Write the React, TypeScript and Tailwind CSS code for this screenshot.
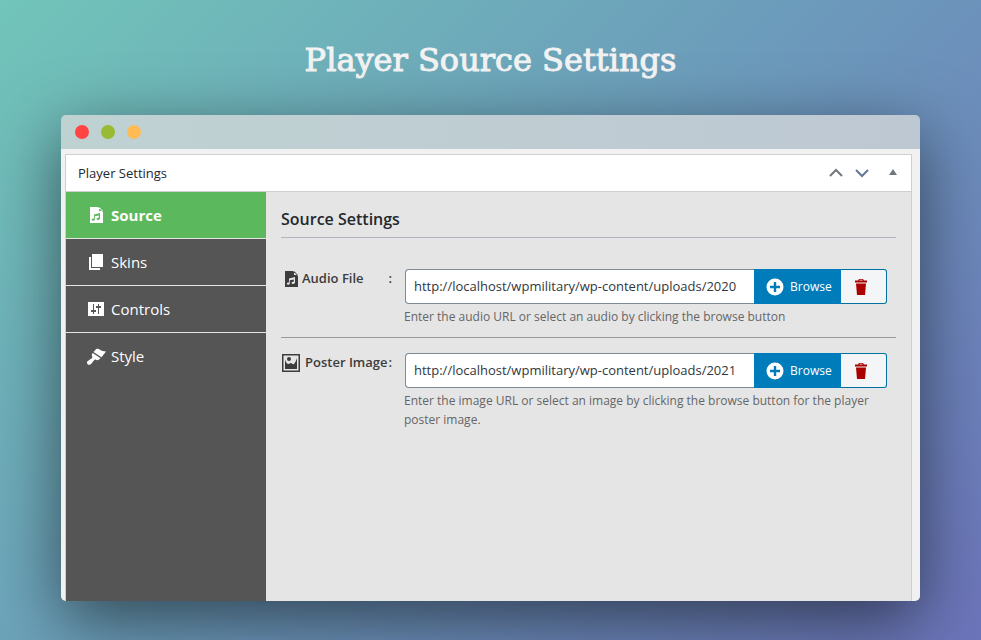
import React from "react";

type IconProps = { className?: string };

function AudioDocIcon({ className }: IconProps) {
  return (
    <svg viewBox="0 0 20 20" className={className} fill="currentColor" fillRule="evenodd" aria-hidden="true">
      <path d="M4 2h8l5 5v11H4V2zm9 0l4 4h-4V2zM14 8l-6 1.4v4.2c-.3-.1-.7-.1-1 0-.8.2-1.3.9-1.2 1.5.2.6 1 .9 1.800.7.7-.2 1.200-.7 1.200-1.300V11.300l4-.9v2.400c-.3-.1-.6-.1-1 0-.8.2-1.300.9-1.200 1.500.2.600 1 .9 1.800.7.7-.2 1.200-.7 1.600-1.300V8z" />
    </svg>
  );
}

function PagesIcon({ className }: IconProps) {
  return (
    <svg viewBox="0 0 20 20" className={className} fill="currentColor" aria-hidden="true">
      <path d="M6 15V2h11v13H6zm-1 1h9v2H3V5h2v11z" />
    </svg>
  );
}

function ControlsIcon({ className }: IconProps) {
  return (
    <svg viewBox="0 0 20 20" className={className} fill="currentColor" fillRule="evenodd" aria-hidden="true">
      <path d="M2 3h16v14H2V3zm5 2v6H5v2h2v2h1v-2h2v-2H8V5H7zm5 0v2h-2v2h2v6h1V9h2V7h-2V5h-1z" />
    </svg>
  );
}

function BrushIcon({ className }: IconProps) {
  return (
    <svg viewBox="0 0 20 20" className={className} fill="currentColor" aria-hidden="true">
      <path d="M7.500 5L10 2.300c1.500-1 2.800-.4 4 .5 1.700 1.200 3.200 1.600 6 1.700L15.500 10.300 7.500 5zM6.700 6l7.900 5.200-1.600 1.300c-1 .8-2 .9-3.100.2-1-.4-1.500 0-2 .7l-2.400 3c-.9 1.200-2.300 1.700-3.600 1-1.300-.9-1.200-2.300-.1-3.300l3.600-2.500c1-.8 1.300-1.400.7-2.400-.5-.9-.4-2 .6-3.200z" />
    </svg>
  );
}

function ImageIcon({ className }: IconProps) {
  return (
    <svg viewBox="0 0 20 20" className={className} fill="currentColor" fillRule="evenodd" aria-hidden="true">
      <path d="M1 1h18v18H1V1zm1.500 1.500v15h15v-15h-15z" />
      <circle cx="8" cy="6" r="2" />
      <path d="M4 6.500c1 3 2 4.500 3.500 4.500 1.200 0 1.500-1 2.500-1 1.200 0 1 1.300 2 1.300C13.700 11.300 15 8 16 5v11H4V6.500z" />
    </svg>
  );
}

function PlusCircleIcon({ className }: IconProps) {
  return (
    <svg viewBox="0 0 18 18" className={className} aria-hidden="true">
      <circle cx="9" cy="9" r="8.500" fill="white" />
      <path d="M9 4v10M4 9h10" stroke="#007cba" strokeWidth="2.400" />
    </svg>
  );
}

function TrashIcon({ className }: IconProps) {
  return (
    <svg viewBox="0 0 14 18" className={className} fill="currentColor" fillRule="evenodd" aria-hidden="true">
      <path d="M5 1h4l1 1.500h3V4.500H1V2.500h3L5 1zm.3 1.500h3.400l-.4-.7H5.700l-.4.700zM2 5.500h10L11 17H3L2 5.500z" />
    </svg>
  );
}

const items = [
  { label: "Source", Icon: AudioDocIcon, active: true },
  { label: "Skins", Icon: PagesIcon, active: false },
  { label: "Controls", Icon: ControlsIcon, active: false },
  { label: "Style", Icon: BrushIcon, active: false },
];

type FieldProps = {
  id: string;
  label: string;
  Icon: React.ComponentType<IconProps>;
  value: string;
  help: string;
  wide?: boolean;
};

function Field({ id, label, Icon, value, help, wide }: FieldProps) {
  return (
    <div className="flex pr-[9px]">
      <label htmlFor={id} className="flex h-5 w-[123px] shrink-0 items-center pr-3 text-[13px] font-semibold whitespace-nowrap text-[#3c3c3c]">
        <Icon className={wide ? "mr-1 size-5 shrink-0" : "mr-px size-5 shrink-0"} />
        {label}
        <span className="ml-auto">:</span>
      </label>
      <div className="min-w-0 flex-1">
        <div className="ml-px flex h-[35px]">
          <input
            id={id}
            defaultValue={value}
            className="min-w-0 flex-1 rounded-l-[4px] border border-r-0 border-[#7e8993] bg-white px-2 text-[13px] text-[#32373c] outline-none"
          />
          <button className="flex w-[87px] shrink-0 items-center gap-1.5 bg-[#007cba] pl-3 text-[12px] text-white">
            <PlusCircleIcon className="size-[18px]" />
            Browse
          </button>
          <button aria-label="Remove" className="flex w-[46px] shrink-0 items-center rounded-r-[3px] border border-l-0 border-[#0071a1] bg-[#f3f5f6] pl-[13px] text-[#a00]">
            <TrashIcon className="h-[18px] w-[14px]" />
          </button>
        </div>
        <p className="mt-[3px] text-[12px] leading-[19px] text-[#666]">{help}</p>
      </div>
    </div>
  );
}

export default function App() {
  return (
    <div className="flex min-h-screen flex-col overflow-hidden bg-linear-[135deg,#71c5b9_0%,#6c9bbb_50%,#6c74ba_100%] px-[61px] pb-[39px] font-['Open_Sans','Noto_Sans',sans-serif]">
      <h1 className="h-[115px] pt-10 text-center font-['DejaVu_Serif',serif] text-[32px] leading-10 text-[#f3f3f3] [-webkit-text-stroke:1px_#f3f3f3]">
        Player Source Settings
      </h1>
      <main className="flex flex-1 flex-col overflow-hidden rounded-[5px] shadow-[0_20px_68px_rgba(0,0,0,0.55)]">
        <div className="flex h-[34px] items-center gap-3 bg-linear-to-r from-[#bfd2d2] to-[#bec8d3] px-[14px]">
          <span className="size-3.5 rounded-full bg-[#ff4444]" />
          <span className="size-3.5 rounded-full bg-[#99bb33]" />
          <span className="size-3.5 rounded-full bg-[#ffbb55]" />
        </div>
        <div className="flex flex-1 flex-col bg-[#f1f1f1] pt-[5px] pr-2 pl-1">
          <section className="flex flex-1 flex-col border border-b-0 border-[#ccd0d4]">
            <header className="flex h-[37px] items-center border-b border-[#ccd0d4] bg-white pr-[14px] pl-3 text-[#72777c]">
              <h2 className="flex-1 pt-px text-[13px] font-medium text-[#23282d]">Player Settings</h2>
              <button aria-label="Move up" className="mr-3">
                <svg viewBox="0 0 14 14" className="size-3.5" fill="none" stroke="currentColor" strokeWidth="2">
                  <path d="M1 10l6-6 6 6" />
                </svg>
              </button>
              <button aria-label="Move down" className="mr-5 text-[#637796]">
                <svg viewBox="0 0 14 14" className="size-3.5" fill="none" stroke="currentColor" strokeWidth="2">
                  <path d="M1 4l6 6 6-6" />
                </svg>
              </button>
              <button aria-label="Toggle panel">
                <svg viewBox="0 0 8 8" className="size-2" fill="currentColor">
                  <path d="M4 0l4 6H0z" />
                </svg>
              </button>
            </header>
            <div className="flex flex-1">
              <nav className="w-[200px] shrink-0 bg-[#555]">
                {items.map(({ label, Icon, active }, i) => (
                  <a
                    key={label}
                    href="#"
                    className={`flex h-[47px] items-center gap-[5px] pl-5 text-[15px] text-white ${
                      active ? "bg-[#5cb85c] font-bold" : ""
                    } ${i < 3 ? "border-b border-[#e5e5e5]" : ""}`}
                  >
                    <Icon className="size-5" />
                    {label}
                  </a>
                ))}
              </nav>
              <div className="min-w-0 flex-1 bg-[#e5e5e5] px-[15px] pt-4">
                <h3 className="h-[30px] border-b border-[#b5b3c2] text-[16px] leading-[22px] font-semibold text-[#23282d]">
                  Source Settings
                </h3>
                <div className="mt-[31px] border-b border-[#999] pb-[11px]">
                  <Field
                    id="audio"
                    label="Audio File"
                    Icon={AudioDocIcon}
                    value="http://localhost/wpmilitary/wp-content/uploads/2020"
                    help="Enter the audio URL or select an audio by clicking the browse button"
                  />
                </div>
                <div className="pt-[15px]">
                  <Field
                    id="poster"
                    label="Poster Image"
                    Icon={ImageIcon}
                    value="http://localhost/wpmilitary/wp-content/uploads/2021"
                    help="Enter the image URL or select an image by clicking the browse button for the player poster image."
                    wide
                  />
                </div>
              </div>
            </div>
          </section>
        </div>
      </main>
    </div>
  );
}
